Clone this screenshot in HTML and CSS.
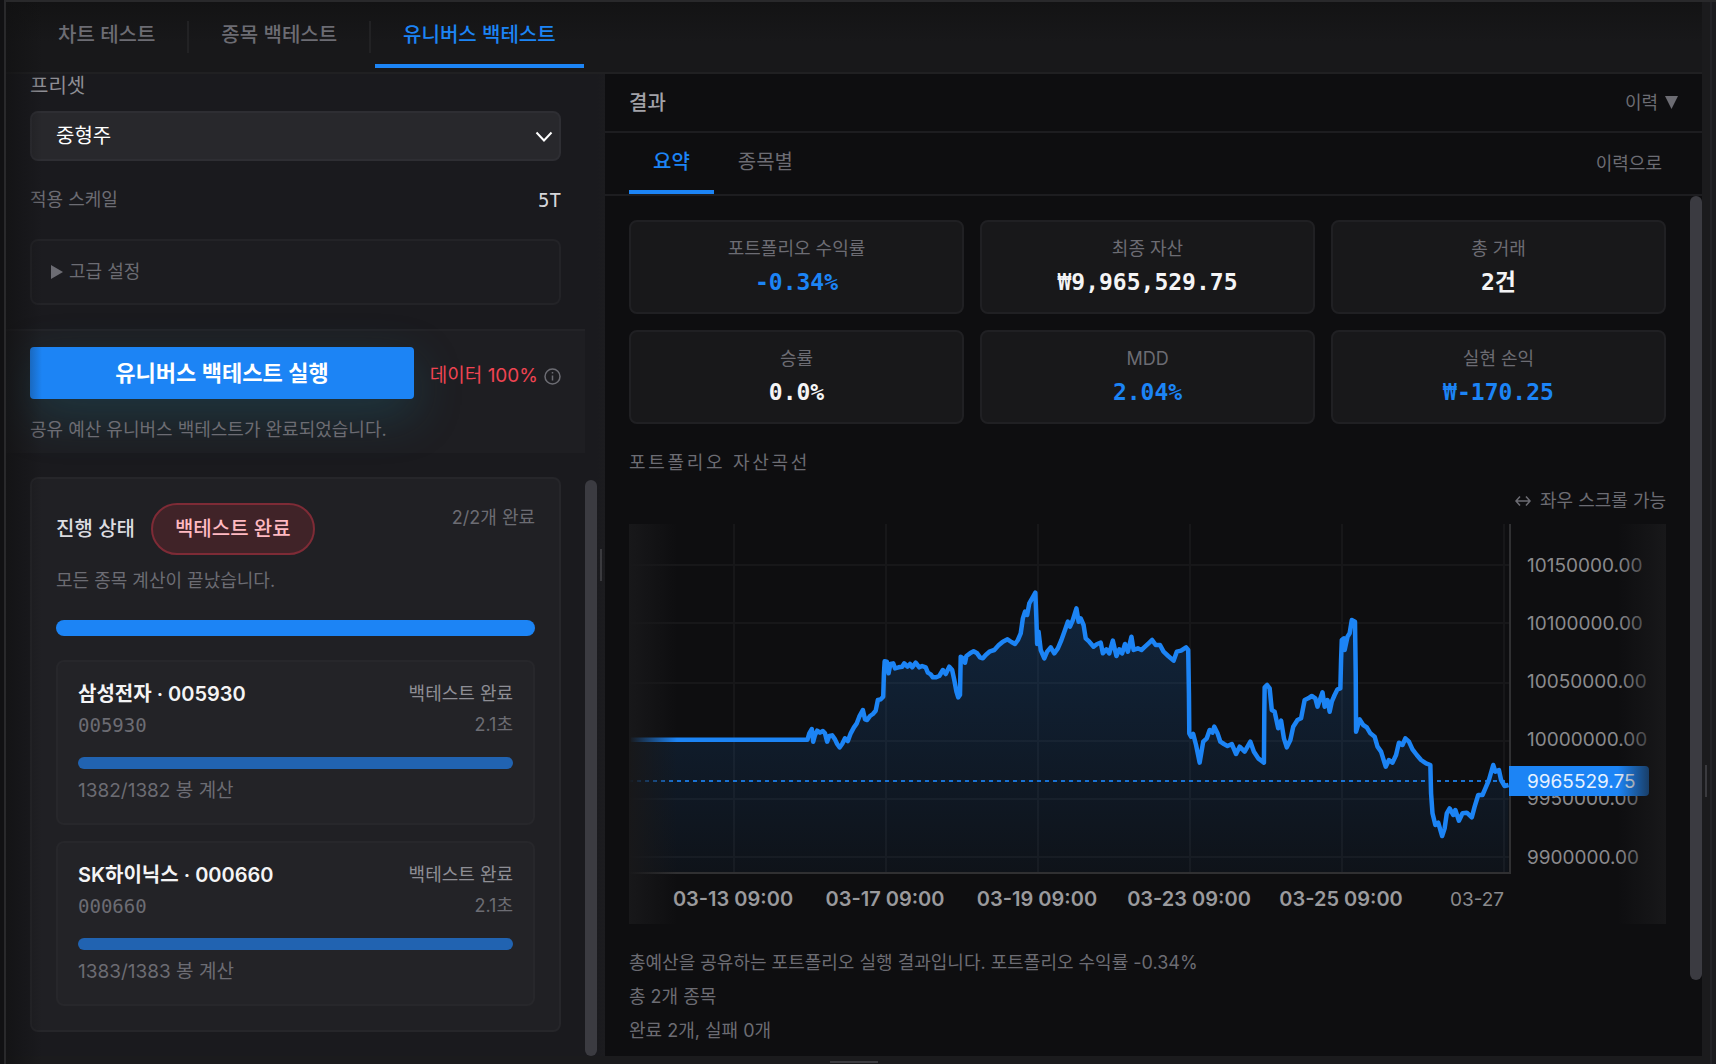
FILE: index.html
```html
<!DOCTYPE html>
<html lang="ko">
<head>
  <meta charset="UTF-8">
  <meta name="viewport" content="width=device-width, initial-scale=1.0">
  <title>유니버스 백테스트</title>
  <link rel="stylesheet" href="styles.css">
</head>
<body>
  <div class="window">
    <div class="main">
      <nav class="top-tabs">
        <button class="top-tab">차트 테스트</button>
        <span class="separator"></span>
        <button class="top-tab">종목 백테스트</button>
        <span class="separator"></span>
        <button class="top-tab active">유니버스 백테스트</button>
      </nav>

      <div class="workspace">
        <!-- Settings -->
        <section class="settings">
          <div class="settings-content">
            <div class="form">
              <label class="preset-label" for="preset">프리셋</label>
              <div class="select-wrap">
                <select id="preset">
                  <option>중형주</option>
                </select>
                <svg class="chevron" width="18" height="12" viewBox="0 0 18 12"><path d="M1.5 1.5 9 9.5 16.5 1.5"/></svg>
              </div>
              <div class="scale-row">
                <span>적용 스케일</span>
                <span class="scale-value">5T</span>
              </div>
              <details class="advanced">
                <summary><svg width="12" height="14" viewBox="0 0 12 14"><path d="M0 0 12 7 0 14z"/></svg>고급 설정</summary>
              </details>
            </div>

            <div class="run-bar">
              <div class="run-row">
                <button class="run-button">유니버스 백테스트 실행</button>
                <span class="data-rate">데이터 100%</span>
                <svg class="info" width="17" height="17" viewBox="0 0 17 17"><circle cx="8.500" cy="8.500" r="7.500"/><path d="M8.500 7.500v5M8.500 4v1.500"/></svg>
              </div>
              <p class="run-status">공유 예산 유니버스 백테스트가 완료되었습니다.</p>
            </div>

            <div class="progress-card">
              <div class="progress-head">
                <h2>진행 상태</h2>
                <span class="badge">백테스트 완료</span>
                <span class="count">2/2개 완료</span>
              </div>
              <p class="progress-note">모든 종목 계산이 끝났습니다.</p>
              <div class="bar"></div>

              <div class="stock">
                <div class="stock-row">
                  <h3>삼성전자 · 005930</h3>
                  <span class="state">백테스트 완료</span>
                </div>
                <div class="stock-row">
                  <span class="code">005930</span>
                  <span>2.1초</span>
                </div>
                <div class="bar small"></div>
                <p>1382/1382 봉 계산</p>
              </div>

              <div class="stock">
                <div class="stock-row">
                  <h3>SK하이닉스 · 000660</h3>
                  <span class="state">백테스트 완료</span>
                </div>
                <div class="stock-row">
                  <span class="code">000660</span>
                  <span>2.1초</span>
                </div>
                <div class="bar small"></div>
                <p>1383/1383 봉 계산</p>
              </div>
            </div>
          </div>
          <div class="settings-scroll"></div>
          <div class="divider"></div>
        </section>

        <!-- Results -->
        <section class="results">
          <header class="results-head">
            <h2>결과</h2>
            <button class="history">이력 <svg width="13" height="13" viewBox="0 0 13 13"><path d="M0 0h13L6.500 13z"/></svg></button>
          </header>
          <div class="sub-tabs">
            <button class="sub-tab active">요약</button>
            <button class="sub-tab">종목별</button>
            <button class="to-history">이력으로</button>
          </div>

          <div class="results-body">
            <div class="results-content">
              <div class="stats">
                <div class="stat"><span>포트폴리오 수익률</span><strong class="blue">-0.34%</strong></div>
                <div class="stat"><span>최종 자산</span><strong>₩9,965,529.75</strong></div>
                <div class="stat"><span>총 거래</span><strong>2건</strong></div>
                <div class="stat"><span>승률</span><strong>0.0%</strong></div>
                <div class="stat"><span>MDD</span><strong class="blue">2.04%</strong></div>
                <div class="stat"><span>실현 손익</span><strong class="blue">₩-170.25</strong></div>
              </div>

              <h3 class="chart-title">포트폴리오 자산곡선</h3>
              <p class="chart-hint"><svg width="16" height="12" viewBox="0 0 16 12"><path d="M1 6h14M5 1.500 1 6l4 4.500M11 1.500 15 6l-4 4.500"/></svg>좌우 스크롤 가능</p>

              <div class="chart">
                <svg viewBox="0 0 1037 400">
                  <defs>
                    <linearGradient id="areaFill" x1="0" y1="0" x2="0" y2="1">
                      <stop offset="0" stop-color="#1c84f5" stop-opacity="0.2"/>
                      <stop offset="1" stop-color="#1c84f5" stop-opacity="0.04"/>
                    </linearGradient>
                  </defs>
                  <path class="grid" d="M0 41H881M0 99H881M0 159H881M0 217H881M0 275H881M0 333H881M105 0V349M257 0V349M409 0V349M561 0V349M713 0V349M875 0V349"/>
                  <!-- equity samples are stored on a finer grid than the chart -->
                  <g transform="translate(-9 -84) scale(0.357143 0.333333)">
                    <path id="area" fill="url(#areaFill)"/>
                    <path id="line" class="line"/>
                  </g>
                  <path class="last" d="M0 257H881"/>
                  <path class="axis" d="M0 349H882M881 0V350"/>
                  <g class="prices">
                    <text x="898" y="48">10150000.00</text>
                    <text x="898" y="106">10100000.00</text>
                    <text x="898" y="164">10050000.00</text>
                    <text x="898" y="222">10000000.00</text>
                    <text x="898" y="281">9950000.00</text>
                    <text x="898" y="340">9900000.00</text>
                  </g>
                  <path class="tag" d="M880 242H1016a4 4 0 0 1 4 4V268a4 4 0 0 1-4 4H880z"/>
                  <text class="tag-text" x="898" y="264">9965529.75</text>
                  <g class="dates">
                    <text x="104" y="382">03-13 09:00</text>
                    <text x="256" y="382">03-17 09:00</text>
                    <text x="408" y="382">03-19 09:00</text>
                    <text x="560" y="382">03-23 09:00</text>
                    <text x="712" y="382">03-25 09:00</text>
                    <text class="light" x="848" y="382">03-27</text>
                  </g>
                </svg>
              </div>

              <div class="notes">
                <p>총예산을 공유하는 포트폴리오 실행 결과입니다. 포트폴리오 수익률 -0.34%</p>
                <p>총 2개 종목</p>
                <p>완료 2개, 실패 0개</p>
              </div>
            </div>
            <div class="results-scroll"></div>
          </div>
        </section>
      </div>

      <div class="bottom-rail"></div>
    </div>
    <div class="side-rail"></div>
  </div>
  <script src="chart.js"></script>
</body>
</html>
```

FILE: styles.css
```css
* {
  box-sizing: border-box;
}

body {
  margin: 0;
  height: 100vh;
  overflow: hidden;
  background: #111113;
  color: #6c6c73;
  font-family: Inter, "Noto Sans CJK KR", sans-serif;
  font-size: 18px;
  line-height: 24px;
}

h2, h3, p {
  margin: 0;
  font-size: inherit;
  font-weight: 400;
}

button {
  padding: 0;
  border: 0;
  background: none;
  color: inherit;
  font: inherit;
  cursor: pointer;
}

/* Window frame */
.window {
  display: flex;
  height: 100%;
  margin-left: 4px;
  border-top: 2px solid #29292b;
  border-left: 2px solid #29292b;
}

.main {
  position: relative;
  flex: 1;
  min-width: 0;
  display: flex;
  flex-direction: column;
}

/* soft shade along the left edge */
.main::after {
  content: "";
  position: absolute;
  top: 0;
  bottom: 0;
  left: 0;
  width: 36px;
  background: linear-gradient(90deg, rgba(17, 17, 18, 0.7), rgba(17, 17, 18, 0));
  pointer-events: none;
}

.side-rail {
  width: 14px;
  padding: 763px 0 0 3px;
  background: linear-gradient(90deg, #1b1b1d 8px, #232328 8px, #232328 10px, #1b1b1f 10px);
}

.side-rail::before {
  content: "";
  display: block;
  width: 2px;
  height: 32px;
  background: #3a3a3e;
}

.bottom-rail {
  height: 8px;
  padding-top: 5px;
  background: #1b1b1d;
}

.bottom-rail::before {
  content: "";
  display: block;
  width: 48px;
  height: 2px;
  margin: 0 auto;
  background: #3c3c40;
}

/* Top tabs */
.top-tabs {
  display: flex;
  align-items: center;
  gap: 4px;
  height: 72px;
  padding-left: 24px;
  border-bottom: 2px solid #202022;
  background: linear-gradient(#131314, #18181a 40px);
}

.top-tab {
  height: 62px;
  padding: 0 28px;
  border-top: 0;
  border-bottom: 4px solid transparent;
  font-size: 20px;
  font-weight: 500;
}

.top-tab.active {
  border-color: #1c84f5;
  color: #1c84f5;
}

.separator {
  width: 2px;
  height: 32px;
  background: #222224;
}

.workspace {
  flex: 1;
  min-height: 0;
  display: grid;
  grid-template-columns: 599fr 1097fr;
}

/* Settings */
.settings {
  display: flex;
  min-height: 0;
  overflow: hidden;
  background: #1a1a1e;
}

.settings-content {
  flex: 1;
}

.form {
  padding: 0 24px;
}

.preset-label {
  display: block;
  margin-bottom: 13px;
  color: #8e8e95;
  font-size: 20px;
}

.select-wrap {
  position: relative;
}

.select-wrap select {
  display: block;
  width: 100%;
  height: 50px;
  padding: 0 24px;
  border: 2px solid #2e2e33;
  border-radius: 8px;
  appearance: none;
  background: #28282c;
  color: #fff;
  font-family: inherit;
  font-size: 20px;
}

.chevron {
  position: absolute;
  top: 20px;
  right: 8px;
  fill: none;
  stroke: #fff;
  stroke-width: 2;
  pointer-events: none;
}

.scale-row {
  display: flex;
  justify-content: space-between;
  margin: 27px 0;
}

.scale-value {
  color: #d6d6da;
  font-family: "DejaVu Sans Mono", monospace;
  font-size: 19px;
}

.advanced {
  padding: 19px;
  border: 2px solid #232327;
  border-radius: 8px;
  background: #1c1c20;
}

.advanced summary {
  display: flex;
  align-items: center;
  gap: 6px;
  list-style: none;
  cursor: pointer;
}

.advanced svg, .history svg {
  fill: #6c6c73;
}

.run-bar {
  margin-top: 24px;
  padding: 16px 24px 11px;
  border-top: 2px solid #232327;
  background: #1e1e22;
}

.run-row {
  display: flex;
  align-items: center;
}

.run-button {
  flex: 1;
  height: 52px;
  border-radius: 4px;
  background: #1c84f5;
  box-shadow: 0 16px 48px rgba(30, 130, 160, 0.26);
  color: #fff;
  font-size: 22px;
  font-weight: 600;
}

.data-rate {
  margin: 6px 6px 0 16px;
  color: #f04452;
  font-size: 19px;
}

.info {
  margin-top: 6px;
  fill: none;
  stroke: #6c6c73;
  stroke-width: 1.5;
}

.run-status {
  position: relative;
  margin-top: 19px;
}

/* Progress card */
.progress-card {
  margin: 24px 24px 0;
  padding: 24px;
  border: 2px solid #26262a;
  border-radius: 8px;
  background: #202024;
}

.progress-head {
  display: flex;
  align-items: center;
}

.progress-head h2 {
  color: #dcdce0;
  font-size: 20px;
  font-weight: 500;
}

.badge {
  margin-left: 16px;
  padding: 12px 22px;
  border: 2px solid #7e2b36;
  border-radius: 27px;
  background: #402328;
  color: #ffb9c1;
  font-size: 20px;
  font-weight: 500;
}

.count {
  align-self: flex-start;
  margin-left: auto;
  padding-top: 3px;
}

.progress-note {
  margin: 14px 0 27px;
}

.bar {
  height: 16px;
  border-radius: 8px;
  background: #1c84f5;
}

.bar.small {
  height: 12px;
  margin: 20px 0 10px;
  background: #2163b1;
}

.stock {
  margin-top: 24px;
  padding: 20px;
  border: 2px solid #27272b;
  border-radius: 8px;
  background: #232327;
}

.stock + .stock {
  margin-top: 16px;
}

.stock p {
  font-size: 19px;
}

.stock-row {
  display: flex;
  justify-content: space-between;
}

.stock-row + .stock-row {
  margin-top: 7px;
}

.stock h3 {
  color: #f4f4f5;
  font-size: 20px;
  font-weight: 600;
}

.state {
  color: #8e8e95;
}

.code {
  font-family: "DejaVu Sans Mono", monospace;
  font-size: 19px;
}

.settings-scroll {
  width: 12px;
  margin-top: 406px;
  border-radius: 6px;
  background: #3b3b41;
}

.divider {
  display: flex;
  align-items: center;
  width: 8px;
  padding-left: 3px;
  background: linear-gradient(90deg, #1a1a1e, #1c1c1f);
}

.divider::before {
  content: "";
  width: 2px;
  height: 32px;
  background: #3a3a3e;
}

/* Results */
.results {
  display: flex;
  flex-direction: column;
  min-width: 0;
  min-height: 0;
  background: #0e0e10;
}

.results-head {
  display: flex;
  align-items: center;
  justify-content: space-between;
  height: 59px;
  padding: 0 24px;
  border-bottom: 2px solid #1d1d20;
}

.results-head h2 {
  color: #a2a2a8;
  font-size: 20px;
  font-weight: 500;
}

.history {
  display: flex;
  align-items: center;
  gap: 7px;
}

.sub-tabs {
  display: flex;
  height: 63px;
  padding: 0 24px;
  border-bottom: 2px solid #1d1d20;
}

.sub-tab {
  padding: 0 24px;
  border-bottom: 4px solid transparent;
  font-size: 20px;
}

.sub-tab.active {
  border-color: #1c84f5;
  color: #1c84f5;
  font-weight: 500;
}

.to-history {
  margin-left: auto;
  padding: 0 16px;
}

.results-body {
  flex: 1;
  min-height: 0;
  display: flex;
  overflow: hidden;
}

.results-content {
  flex: 1;
  min-width: 0;
  padding: 24px;
}

.results-scroll {
  width: 12px;
  height: 784px;
  border-radius: 6px;
  background: #3b3b41;
}

.stats {
  display: grid;
  grid-template-columns: repeat(3, 1fr);
  gap: 16px;
}

.stat {
  display: flex;
  flex-direction: column;
  align-items: center;
  gap: 6px;
  padding: 16px 16px 14px;
  border: 2px solid #202023;
  border-radius: 8px;
  background: #18181a;
}

.stat span {
  line-height: 22px;
}

.stat strong {
  color: #f4f4f5;
  font-family: "DejaVu Sans Mono", "Noto Sans CJK KR", monospace;
  font-size: 23px;
  line-height: 32px;
}

.stat .blue {
  color: #1c84f5;
}

.chart-title {
  margin-top: 27px;
  letter-spacing: 0.15em;
}

.chart-hint {
  display: flex;
  align-items: center;
  justify-content: flex-end;
  gap: 9px;
  margin: 14px 0 11px;
}

.chart-hint svg {
  fill: none;
  stroke: #6c6c73;
  stroke-width: 1.5;
}

.chart {
  position: relative;
}

.chart > svg {
  display: block;
  width: 100%;
}

/* fades at both ends of the scrollable chart */
.chart::after {
  content: "";
  position: absolute;
  inset: 0;
  background:
    linear-gradient(90deg, #18181a, rgba(24, 24, 26, 0)) left / 48px 100% no-repeat,
    linear-gradient(270deg, #18181a, rgba(24, 24, 26, 0)) right / 48px 100% no-repeat;
  pointer-events: none;
}

.grid {
  fill: none;
  stroke: #fff;
  stroke-opacity: 0.04;
  stroke-width: 2;
}

.axis {
  fill: none;
  stroke: #303032;
  stroke-width: 2;
}

.line {
  fill: none;
  stroke: #1c84f5;
  stroke-width: 4.5;
  stroke-linejoin: round;
  vector-effect: non-scaling-stroke;
}

.last {
  stroke: #1c84f5;
  stroke-width: 2;
  stroke-dasharray: 4 4;
  stroke-opacity: 0.85;
}

.prices, .dates {
  fill: #8a8a8d;
  font-size: 19px;
}

.dates {
  fill: #9a9a9d;
  font-size: 20px;
  font-weight: 600;
  text-anchor: middle;
}

.dates .light {
  fill: #8a8a8d;
  font-size: 19px;
  font-weight: 400;
}

.tag {
  fill: #1c84f5;
}

.tag-text {
  fill: #e6f1ff;
  font-size: 19px;
}

.notes {
  margin-top: 22px;
  line-height: 34px;
}
```

FILE: chart.js
```js
const samples = [
  [30, 899], [525, 899], [530, 880], [537, 867], [541, 905], [546, 885], [552, 872], [560, 878],
  [568, 873], [574, 880], [580, 905], [586, 888], [594, 886], [602, 898], [608, 912], [615, 922],
  [622, 912], [630, 895], [638, 903], [646, 880], [655, 862], [663, 850], [670, 830], [680, 810],
  [686, 838], [692, 840], [700, 828], [708, 822], [716, 812], [722, 780], [730, 778], [737, 770],
  [739, 700], [741, 664], [747, 665], [752, 700], [757, 672], [765, 670], [770, 685], [780, 682],
  [790, 680], [796, 670], [805, 680], [812, 672], [818, 682], [828, 668], [838, 682], [846, 678],
  [856, 682], [862, 698], [870, 703], [876, 712], [884, 712], [894, 708], [904, 690], [912, 702],
  [922, 680], [930, 690], [936, 720], [942, 755], [947, 772], [952, 765], [954, 650], [960, 655],
  [966, 668], [970, 648], [980, 640], [990, 634], [1000, 640], [1008, 652], [1016, 655], [1024, 645],
  [1036, 634], [1048, 630], [1060, 616], [1072, 605], [1085, 598], [1096, 606], [1106, 612], [1114, 600],
  [1122, 580], [1128, 535], [1134, 515], [1140, 525], [1146, 490], [1154, 475], [1163, 458], [1166, 540],
  [1168, 612], [1172, 575], [1178, 630], [1188, 655], [1196, 635], [1206, 622], [1216, 640], [1226, 625],
  [1236, 600], [1246, 570], [1254, 545], [1260, 560], [1268, 540], [1278, 505], [1284, 545], [1290, 535],
  [1298, 555], [1304, 595], [1314, 605], [1326, 620], [1336, 612], [1346, 608], [1352, 640], [1362, 628],
  [1370, 640], [1380, 602], [1390, 648], [1398, 628], [1406, 640], [1414, 612], [1422, 635], [1432, 590],
  [1438, 630], [1450, 625], [1460, 630], [1470, 620], [1480, 610], [1490, 600], [1500, 615], [1512, 615],
  [1522, 635], [1535, 648], [1550, 662], [1559, 635], [1571, 632], [1585, 622], [1591, 630], [1593, 760],
  [1594, 880], [1599, 890], [1605, 882], [1613, 915], [1623, 968], [1633, 905], [1643, 895], [1651, 870],
  [1659, 878], [1664, 860], [1673, 880], [1681, 905], [1691, 912], [1701, 918], [1713, 912], [1725, 942],
  [1735, 920], [1749, 935], [1765, 905], [1775, 935], [1787, 955], [1803, 968], [1804, 820], [1805, 742],
  [1812, 735], [1819, 745], [1825, 810], [1833, 815], [1843, 865], [1851, 842], [1859, 895], [1867, 922],
  [1877, 900], [1885, 860], [1897, 840], [1907, 835], [1917, 780], [1927, 775], [1937, 768], [1947, 775],
  [1953, 800], [1967, 757], [1973, 800], [1981, 780], [1987, 815], [1993, 785], [2001, 765], [2009, 748],
  [2017, 745], [2019, 660], [2021, 600], [2027, 595], [2029, 630], [2037, 590], [2043, 580], [2049, 540],
  [2058, 545], [2060, 700], [2061, 875], [2071, 838], [2081, 855], [2091, 862], [2101, 880], [2113, 890],
  [2121, 920], [2131, 935], [2144, 980], [2153, 960], [2163, 968], [2173, 945], [2181, 908], [2191, 915],
  [2199, 895], [2209, 905], [2219, 928], [2231, 945], [2243, 960], [2257, 970], [2269, 975], [2271, 1060],
  [2275, 1120], [2283, 1155], [2291, 1148], [2302, 1188], [2309, 1165], [2315, 1120], [2323, 1105], [2333, 1125],
  [2339, 1110], [2349, 1142], [2359, 1120], [2371, 1118], [2385, 1132], [2393, 1100], [2403, 1065], [2415, 1065],
  [2423, 1045], [2433, 1020], [2445, 975], [2451, 995], [2461, 990], [2467, 1020], [2477, 1038], [2488, 1035]
];

const baseY = 1298;
const line = 'M' + samples.map(([x, y]) => `${x} ${y}`).join('L');

document.getElementById('line').setAttribute('d', line);
document.getElementById('area').setAttribute('d', `${line}V${baseY}H${samples[0][0]}z`);
```
